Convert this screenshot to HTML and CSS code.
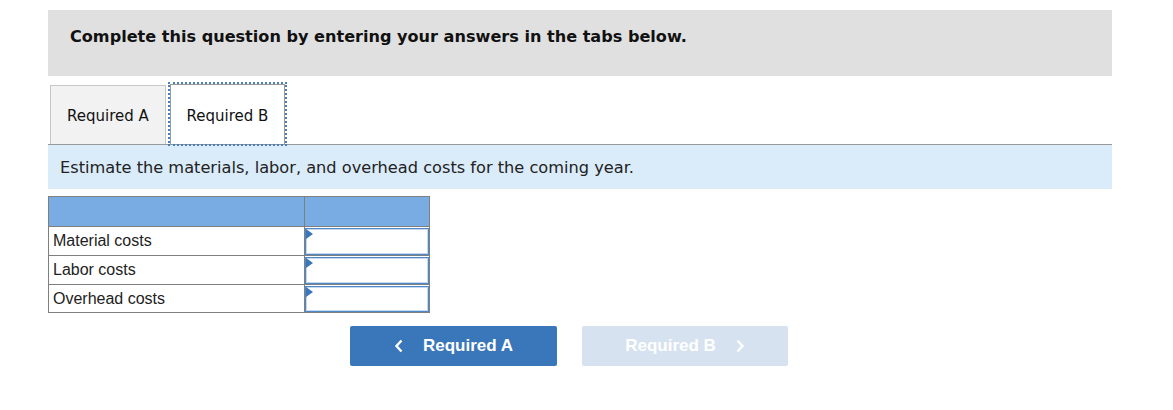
FILE: index.html
```html
<!DOCTYPE html>
<html>
<head>
<meta charset="utf-8">
<link rel="stylesheet" href="styles.css">
</head>
<body>
<div class="page">
  <div class="banner">Complete this question by entering your answers in the tabs below.</div>
  <div class="tabs">
    <div class="tab tab-a">Required A</div>
    <div class="tab tab-b">Required B</div>
  </div>
  <div class="instr">Estimate the materials, labor, and overhead costs for the coming year.</div>
  <table class="grid">
    <tr class="head"><th class="c1"></th><th class="c2"></th></tr>
    <tr><td class="c1">Material costs</td><td class="c2"><div class="inp"><span class="tri"></span></div></td></tr>
    <tr><td class="c1">Labor costs</td><td class="c2"><div class="inp"><span class="tri"></span></div></td></tr>
    <tr class="last"><td class="c1">Overhead costs</td><td class="c2"><div class="inp"><span class="tri"></span></div></td></tr>
  </table>
  <div class="nav">
    <button class="btn prev"><svg width="10" height="14" viewBox="0 0 10 14"><path d="M7.5 1.5 L2.5 7 L7.5 12.5" fill="none" stroke="#fff" stroke-width="2.4"/></svg><span>Required A</span></button>
    <button class="btn next"><span>Required B</span><svg width="10" height="14" viewBox="0 0 10 14"><path d="M2.5 1.5 L7.5 7 L2.5 12.5" fill="none" stroke="#fff" stroke-width="2.4"/></svg></button>
  </div>
</div>
</body>
</html>
```
FILE: styles.css
```css
body { margin: 0; background: #fff; }
.page { padding: 10px 61px 0 48px; width: 1064px; }
.banner {
  background: #e0e0e0;
  height: 66px;
  box-sizing: border-box;
  padding: 17px 22px 0;
  font-family: "DejaVu Sans", Verdana, sans-serif;
  font-weight: bold;
  font-size: 16.1px;
  line-height: 20px;
  color: #111;
}
.tabs {
  display: flex;
  align-items: flex-end;
  padding: 0 0 0 2px;
  margin-top: 8px;
  height: 60px;
  border-bottom: 1px solid #999;
}
.tab {
  font-family: "DejaVu Sans", Verdana, sans-serif;
  font-size: 15px;
  color: #111;
  display: flex;
  align-items: center;
  justify-content: center;
  box-sizing: border-box;
  padding-top: 2px;
}
.tab-a {
  width: 116px;
  height: 59px;
  background: #f2f2f2;
  border: 1px solid #c8c8c8;
  border-bottom: none;
}
.tab-b {
  width: 115px;
  height: 60px;
  margin-left: 4px;
  background: #fff;
  border: 1px solid #999;
  border-bottom: none;
  outline: 2px dotted #4a7ebb;
  outline-offset: 0;
}
.instr {
  background: #daebf9;
  height: 44px;
  box-sizing: border-box;
  padding: 13px 12px 0;
  font-family: "DejaVu Sans", Verdana, sans-serif;
  font-size: 16.2px;
  line-height: 20px;
  color: #222;
}
.grid {
  margin-top: 7px;
  border-collapse: collapse;
  font-family: "Liberation Sans", Arial, sans-serif;
  font-size: 16px;
  line-height: 18px;
  color: #222;
}
.grid th, .grid td {
  border: 1px solid #7f7f7f;
  padding: 0;
}
.grid .head th { background: #7aace4; height: 29px; }
.grid .c1 { width: 256px; padding-left: 4px; box-sizing: border-box; }
.grid td.c1 { height: 29px; }
.grid .last td.c1 { height: 28px; }
.grid .c2 { width: 124px; }
.inp {
  position: relative;
  height: 25px;
  border: 1px solid #4f88c6;
  box-shadow: inset 0 0 0 1px #c5d8ef;
  background: #fff;
}
.grid .last .inp { height: 24px; }
.tri {
  position: absolute;
  left: 0;
  top: 0;
  width: 0; height: 0;
  border-top: 5px solid transparent;
  border-bottom: 5px solid transparent;
  border-left: 7px solid #3a76ba;
}
.nav {
  display: flex;
  gap: 25px;
  margin-top: 13px;
  padding-left: 302px;
}
.btn {
  width: 207px;
  height: 40px;
  border: none;
  border-radius: 2px;
  font-family: "Liberation Sans", Arial, sans-serif;
  font-weight: bold;
  font-size: 17px;
  color: #fff;
  display: flex;
  align-items: center;
  justify-content: center;
  gap: 19px;
  padding: 0;
}
.prev { background: #3a76ba; }
.next { background: #d6e2f0; width: 206px; }
```
